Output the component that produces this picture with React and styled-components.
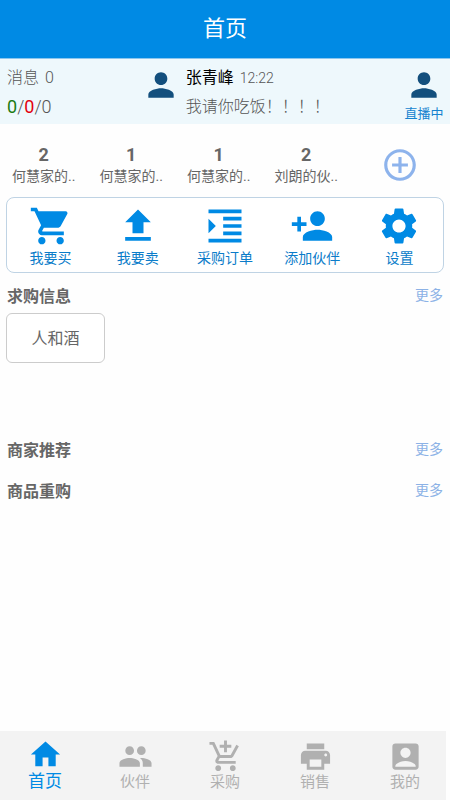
import React, {useState} from 'react';
import styled, {createGlobalStyle} from 'styled-components'
import {
  MdAccountBox,
  MdAddCircleOutline,
  MdAddShoppingCart,
  MdFileUpload,
  MdFormatIndentIncrease,
  MdHome,
  MdPeople,
  MdPerson,
  MdPersonAdd,
  MdPrint,
  MdSettings,
  MdShoppingCart
} from 'react-icons/md'

const GlobalStyle = createGlobalStyle`
  * {
    box-sizing: border-box;
  }

  body {
    margin: 0;
    background: #fefefe;
    color: #666;
    font-family: Roboto, "Noto Sans CJK SC", sans-serif;
    font-size: 16px;
    line-height: 24px;
  }

  button {
    padding: 0;
    border: none;
    background: none;
    color: inherit;
    font: inherit;
    cursor: pointer;
  }

  a {
    color: inherit;
    text-decoration: none;
  }

  svg {
    display: block;
  }
`

const Page = styled.div`
  min-height: 100vh;
  display: flex;
  flex-direction: column;
`

const Header = styled.header`
  height: 58px;
  display: flex;
  align-items: center;
  justify-content: center;
  background: #008ae4;
  color: white;
`

const Title = styled.h1`
  margin: 0;
  font-size: 22px;
  line-height: 32px;
  font-weight: 400;
`

const MessageBar = styled.section`
  display: grid;
  grid-template-columns: 31% 1fr 40px;
  padding: 7px 6px 0;
  height: 66px;
  background: #eef8fc;
  border-top: 1px solid #8cc6ee;
  color: #555;
  font-weight: 300;
`

const Stats = styled.div`
  display: flex;
  flex-direction: column;
  gap: 5px;
  padding-left: 1px;
`

const StatsLabel = styled.div`
  display: flex;
  gap: 6px;
`

const Counts = styled.div`
  font-size: 18px;
`

const Count = styled.span`
  color: ${({color}) => color};
  font-weight: 400;
`

const Message = styled.a`
  display: flex;
  gap: 6px;
`

const Avatar = styled(MdPerson)`
  width: 38px;
  height: 38px;
  flex: none;
  color: #134f7d;
`

const MessageBody = styled.div`
  display: flex;
  flex-direction: column;
  gap: 5px;
  white-space: nowrap;
`

const Sender = styled.span`
  color: black;
  font-weight: 400;
`

const Time = styled.time`
  margin-left: 6px;
  font-size: 14px;
`

const Live = styled.a`
  display: flex;
  flex-direction: column;
  align-items: center;
  color: #1583cf;
  font-size: 13px;
  line-height: 20px;
  font-weight: 400;
  white-space: nowrap;
`

const Partners = styled.section`
  display: grid;
  grid-template-columns: repeat(4, 7fr) 8fr;
  align-items: center;
  height: 73px;
  padding-top: 8px;
`

const Partner = styled.a`
  text-align: center;
  font-size: 14px;
  line-height: 20px;
`

const PartnerCount = styled.div`
  font-size: 18px;
  line-height: 22px;
  font-weight: 700;
`

const AddPartner = styled.button`
  justify-self: center;
  color: #8db3ec;
`

const Actions = styled.nav`
  display: grid;
  grid-template-columns: repeat(5, 1fr);
  margin: 0 6px;
  padding: 6px 0 4px;
  background: white;
  border: 1px solid #bfd3e4;
  border-radius: 8px;
`

const Action = styled.button`
  display: flex;
  flex-direction: column;
  align-items: center;
  color: #0b7cc9;
  font-size: 14px;
  line-height: 20px;

  svg {
    color: #008ae4;
  }
`

const Section = styled.section`
  padding: 0 6px;
  min-height: ${({tall}) => tall ? '154px' : '41px'};
`

const SectionHeader = styled.div`
  display: flex;
  justify-content: space-between;
  align-items: center;
  padding: 0 1px;
  height: 40px;
`

const SectionTitle = styled.h2`
  margin: 0;
  padding-top: 8px;
  font-size: 16px;
  font-weight: 700;
`

const More = styled.a`
  padding-top: 4px;
  color: #8cb2e6;
  font-size: 14px;
`

const Demand = styled.button`
  width: 99px;
  height: 50px;
  padding-top: 2px;
  background: white;
  border: 1px solid #ccc;
  border-radius: 6px;
`

const TabBar = styled.nav`
  display: grid;
  grid-template-columns: repeat(5, 1fr);
  height: 69px;
  margin-top: auto;
  padding-top: 6px;
  background: linear-gradient(#f3f3f3, #f3f3f3) no-repeat left / calc(100% - 4px) 100%;
`

const Tab = styled.button`
  display: flex;
  flex-direction: column;
  align-items: center;
  padding-top: ${({active}) => active ? '0' : '2px'};
  color: ${({active}) => active ? '#008ae4' : '#b0b0b0'};
  font-size: ${({active}) => active ? '17px' : '15px'};
  line-height: ${({active}) => active ? '18px' : '16px'};
`

const partners = [
  {id: 1, count: 2, name: '何慧家的..'},
  {id: 2, count: 1, name: '何慧家的..'},
  {id: 3, count: 1, name: '何慧家的..'},
  {id: 4, count: 2, name: '刘朗的伙..'}
]

const actions = [
  {text: '我要买', icon: MdShoppingCart},
  {text: '我要卖', icon: MdFileUpload},
  {text: '采购订单', icon: MdFormatIndentIncrease},
  {text: '添加伙伴', icon: MdPersonAdd},
  {text: '设置', icon: MdSettings}
]

const tabs = [
  {text: '首页', icon: MdHome},
  {text: '伙伴', icon: MdPeople},
  {text: '采购', icon: MdAddShoppingCart},
  {text: '销售', icon: MdPrint},
  {text: '我的', icon: MdAccountBox}
]

const HomeSection = ({title, tall, children}) => (
  <Section tall={tall}>
    <SectionHeader>
      <SectionTitle>{title}</SectionTitle>
      <More href="#">更多</More>
    </SectionHeader>
    {children}
  </Section>
)

const App = () => {
  const [activeTab, setActiveTab] = useState('首页')

  const renderPartners = partners.map(({id, count, name}) => (
    <Partner key={id} href="#">
      <PartnerCount>{count}</PartnerCount>
      {name}
    </Partner>
  ))

  const renderActions = actions.map(({text, icon: Icon}) => (
    <Action key={text}>
      <Icon size={44} />
      {text}
    </Action>
  ))

  const renderTabs = tabs.map(({text, icon: Icon}) => (
    <Tab key={text} active={text === activeTab} onClick={() => setActiveTab(text)}>
      <Icon size={35} />
      {text}
    </Tab>
  ))

  return <Page>
    <GlobalStyle />
    <Header>
      <Title>首页</Title>
    </Header>
    <MessageBar>
      <Stats>
        <StatsLabel>
          <span>消息</span>
          <span>0</span>
        </StatsLabel>
        <Counts>
          <Count color="#1c7c12">0</Count>/<Count color="#e3000f">0</Count>/0
        </Counts>
      </Stats>
      <Message href="#">
        <Avatar />
        <MessageBody>
          <div>
            <Sender>张青峰</Sender>
            <Time>12:22</Time>
          </div>
          <div>我请你吃饭！！！！</div>
        </MessageBody>
      </Message>
      <Live href="#">
        <Avatar />
        直播中
      </Live>
    </MessageBar>
    <Partners>
      {renderPartners}
      <AddPartner aria-label="添加">
        <MdAddCircleOutline size={38} />
      </AddPartner>
    </Partners>
    <Actions>{renderActions}</Actions>
    <HomeSection title="求购信息" tall>
      <Demand>人和酒</Demand>
    </HomeSection>
    <HomeSection title="商家推荐" />
    <HomeSection title="商品重购" />
    <TabBar>{renderTabs}</TabBar>
  </Page>
}

export default App
